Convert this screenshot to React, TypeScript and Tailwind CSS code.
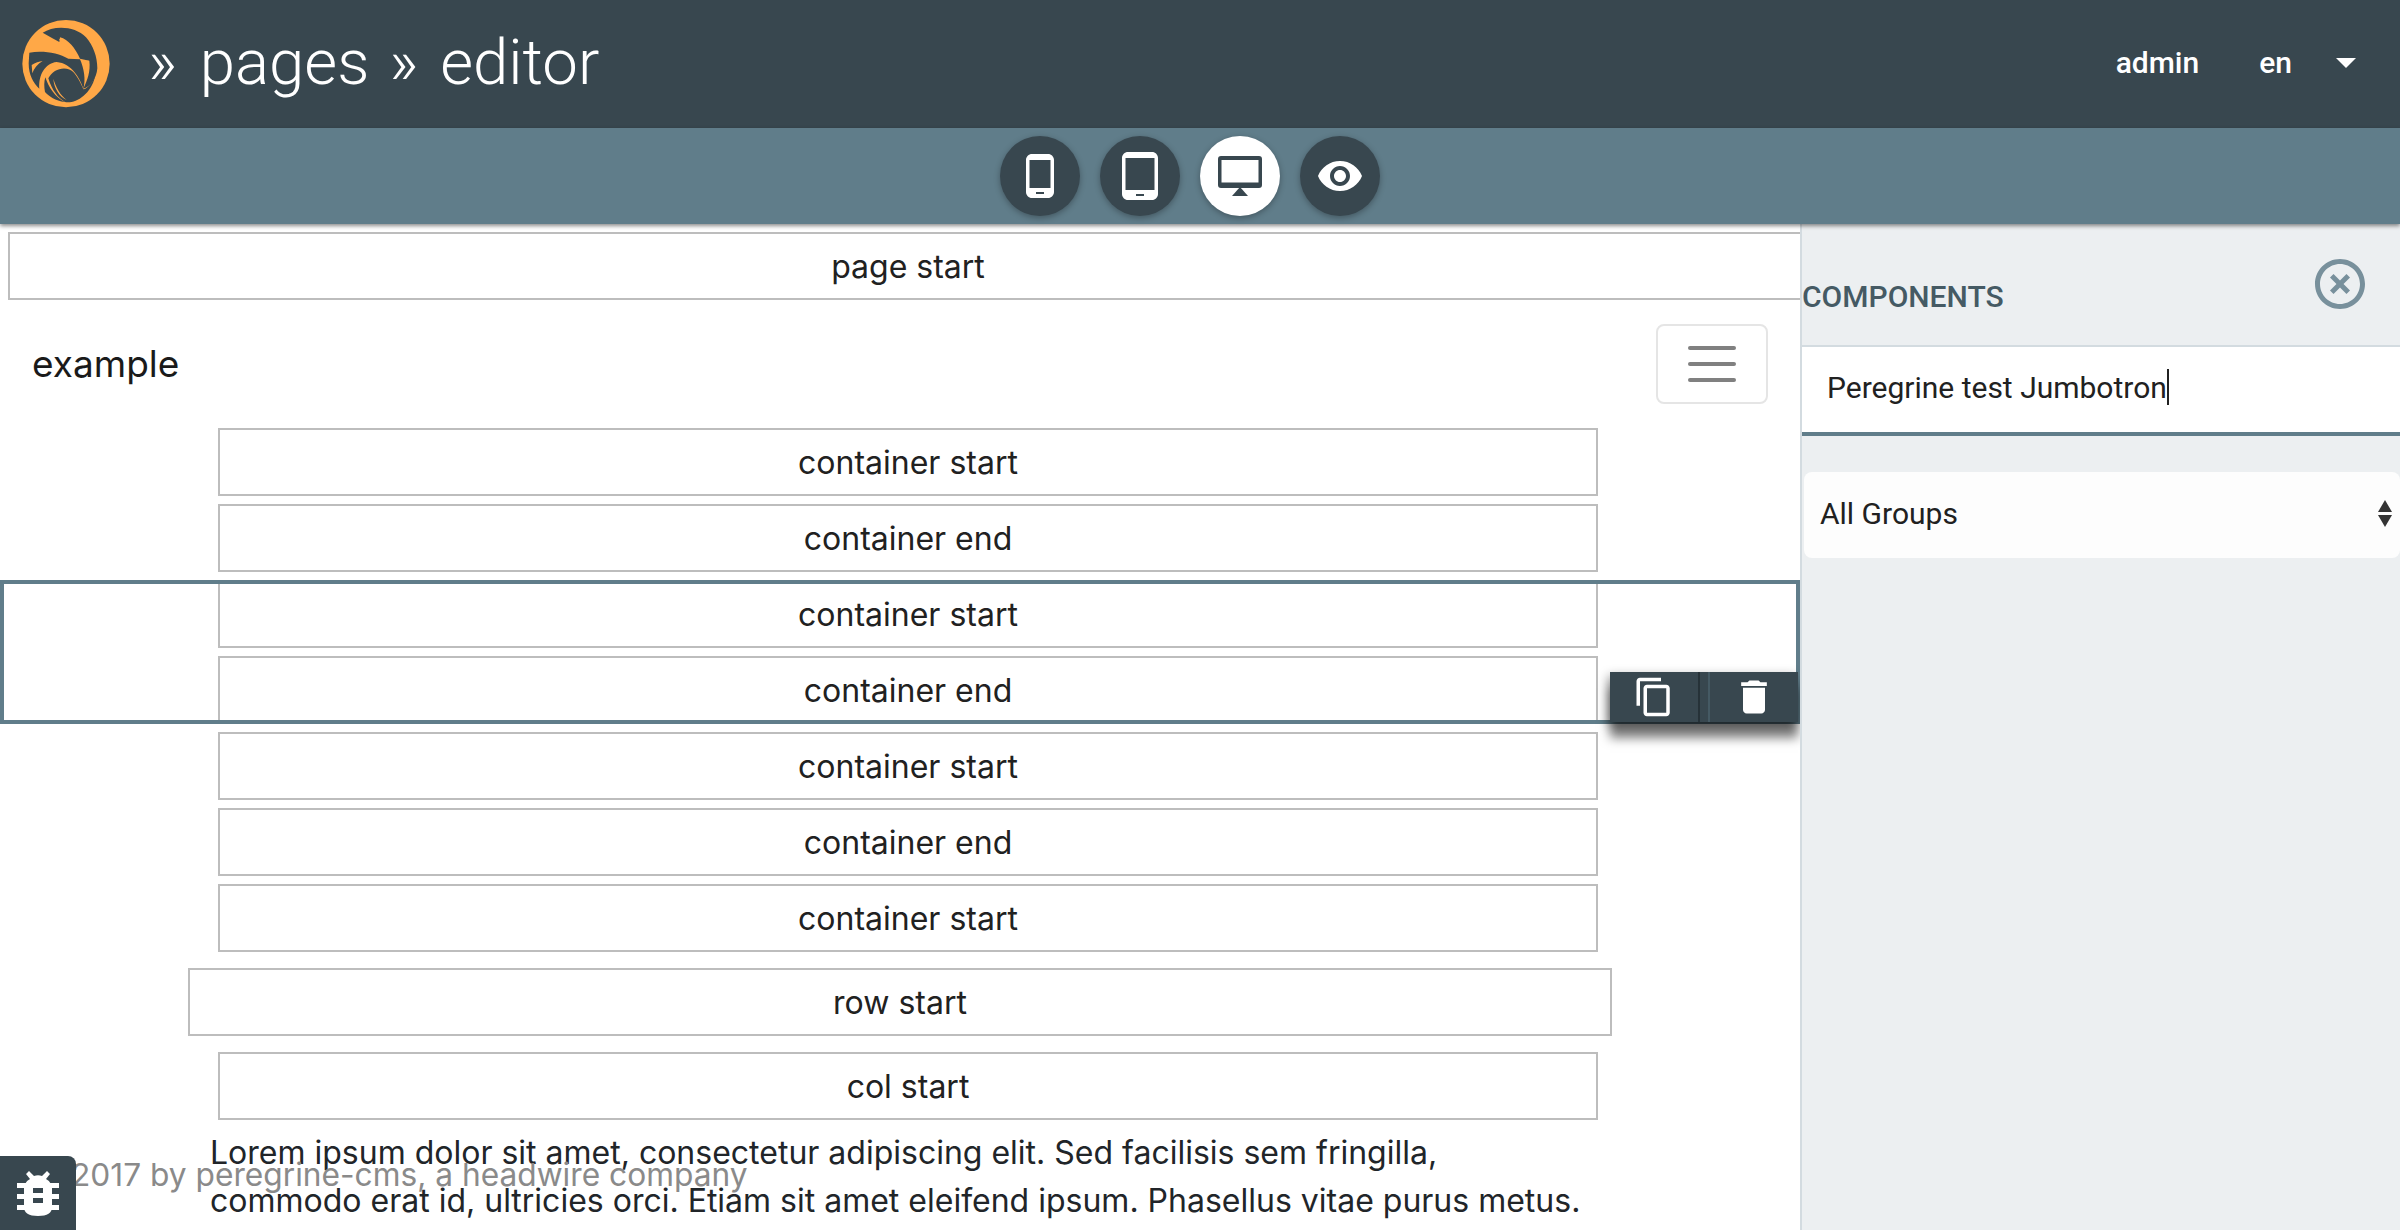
import { MdPhoneAndroid, MdTabletAndroid, MdVisibility, MdContentCopy, MdDelete, MdHighlightOff } from 'react-icons/md';

function Logo() {
  return (
    <svg viewBox="0 0 390 390" className="w-[130px] h-[130px] absolute left-0 top-0">
      <circle cx="198" cy="191" r="131" fill="#ffa847" />
      {/* dark cut-outs of the eagle */}
      <path d="M128 98 C160 76 225 76 258 112 C280 138 292 170 292 205 C290 235 270 262 250 266 C262 240 272 215 268 182 L240 176 C226 145 205 118 180 112 L178 126 L160 116 Z" fill="#38474f" />
      <path d="M88 158 C125 150 175 158 205 176 L240 178 C252 205 258 240 250 266 C240 235 215 190 170 186 C135 190 115 225 118 266 C100 250 86 225 86 190 Z" fill="#38474f" />
      <path d="M145 235 C160 205 200 195 222 218 C236 236 246 256 250 268 C262 266 275 250 285 230 C272 285 225 312 195 306 C175 295 155 270 145 235 Z" fill="#38474f" />
      <path d="M136 232 C146 262 165 292 195 306 C165 302 148 290 135 276 C132 260 132 245 136 232 Z" fill="#38474f" />
      <path d="M95 195 C105 188 118 184 128 183 C112 192 102 205 97 220 Z" fill="#ffa847" />
      <path d="M176 116 C195 125 212 145 222 170 C205 155 190 135 176 116 Z" fill="#ffa847" />
      <path d="M255 182 L266 182 L262 198 Z" fill="#ffa847" />
      <path d="M160 236 C168 262 180 285 200 300 C178 290 162 265 160 236 Z" fill="#ffa847" />
    </svg>
  );
}

function DesktopIcon() {
  return (
    <svg viewBox="0 0 44 40" className="w-11 h-10" fill="currentColor">
      <path fillRule="evenodd" d="M3 0H41a3 3 0 0 1 3 3V29a3 3 0 0 1-3 3H3a3 3 0 0 1-3-3V3a3 3 0 0 1 3-3ZM3.500 4V26.500H40.500V4Z" />
      <path d="M22 31L30 40H14Z" />
    </svg>
  );
}

function BugIcon() {
  return (
    <svg viewBox="0 0 42 45" className="w-[42px] h-[45px]" fill="white">
      <path d="M9 3L12 0L17 5Q21 3.500 25 5L30 0L33 3L29 8Q33 10 34 13H8Q9 10 13 8Z" />
      <path d="M7 13H35V36Q35 45 21 45Q7 45 7 36Z" />
      <rect x="0" y="12" width="42" height="5" />
      <rect x="0" y="23" width="42" height="5" />
      <rect x="0" y="34" width="42" height="5" />
      <rect x="16" y="17" width="10" height="5" fill="#38474f" />
      <rect x="16" y="27" width="10" height="5" fill="#38474f" />
    </svg>
  );
}

function Box({ label, className }: { label: string; className: string }) {
  return (
    <div className={`h-[68px] shrink-0 pt-[2px] border-2 border-[#bdbdbd] bg-white flex items-center justify-center text-[32px] text-[#212121] ${className}`}>
      {label}
    </div>
  );
}

function ToolButton({ children, active }: { children: React.ReactNode; active?: boolean }) {
  return (
    <div className={`w-20 h-20 rounded-full flex items-center justify-center shadow-[0_2px_6px_rgba(0,0,0,0.3)] ${active ? 'bg-white text-[#38474f]' : 'bg-[#38474f] text-white'}`}>
      {children}
    </div>
  );
}

export default function App() {
  return (
    <div className="relative w-[2400px] h-[1230px] overflow-hidden bg-white font-['Inter',sans-serif]">
      {/* Header */}
      <header className="relative h-32 bg-[#38474f] flex items-center text-white font-['Roboto',sans-serif]">
        <Logo />
        <div className="flex items-center pl-[148px] pb-[3px] text-[63.500px] font-light leading-none">
          <span>»</span>
          <span className="ml-[23px]">pages</span>
          <span className="ml-[20px]">»</span>
          <span className="ml-[22px]">editor</span>
        </div>
        <div className="ml-auto flex items-center text-[30px] font-medium pr-11 pb-[3px]">
          <span>admin</span>
          <span className="ml-[60px]">en</span>
          <span className="ml-[44px] w-0 h-0 border-x-[10px] border-x-transparent border-t-[10px] border-t-white" />
        </div>
      </header>

      {/* Toolbar */}
      <div className="relative z-10 h-24 pr-5 bg-[#607d8a] flex items-center justify-center gap-5 shadow-[0_2px_4px_rgba(0,0,0,0.45)]">
        <ToolButton><MdPhoneAndroid className="w-[48px] h-[48px]" /></ToolButton>
        <ToolButton><MdTabletAndroid className="w-[48px] h-[48px]" /></ToolButton>
        <ToolButton active><DesktopIcon /></ToolButton>
        <ToolButton><MdVisibility className="w-[48px] h-[48px]" /></ToolButton>
      </div>

      <div className="flex h-[1006px]">
        {/* Page canvas */}
        <main className="relative w-[1800px] shrink-0 pt-2 overflow-hidden">
          <Box label="page start" className="ml-2 w-[1800px]" />
          <div className="flex items-center justify-between px-8 py-6">
            <span className="text-[37px] text-[#1a1a1a]">example</span>
            <div className="w-28 h-20 border-2 border-[#e5e5e5] rounded-lg flex flex-col items-center justify-center gap-3">
              <span className="block w-12 h-1 rounded-full bg-[#808080]" />
              <span className="block w-12 h-1 rounded-full bg-[#808080]" />
              <span className="block w-12 h-1 rounded-full bg-[#808080]" />
            </div>
          </div>
          <div className="flex flex-col gap-2 ml-[218px] w-[1380px]">
            <Box label="container start" className="w-full" />
            <Box label="container end" className="w-full" />
            <div className="relative flex flex-col gap-2">
              <Box label="container start" className="w-full" />
              <Box label="container end" className="w-full" />
              {/* Selection outline */}
              <div className="absolute -left-[218px] -right-[202px] inset-y-0 border-4 border-[#607d8a]">
                <div className="absolute -right-[2px] bottom-[-2px] w-[188px] h-[50px] bg-[#38474f] flex items-center shadow-[0_16px_10px_rgba(0,0,0,0.5),-2px_4px_10px_rgba(0,0,0,0.4)]">
                  <div className="w-[88px] flex justify-center text-white"><MdContentCopy className="w-[42px] h-[42px]" /></div>
                  <div className="w-[2px] h-full bg-[#263238]" />
                  <div className="w-2 h-full" />
                  <div className="w-[2px] h-full bg-[#455a64]" />
                  <div className="flex-1 flex justify-center text-white"><MdDelete className="w-[44px] h-[44px]" /></div>
                </div>
              </div>
            </div>
            <Box label="container start" className="w-full" />
            <Box label="container end" className="w-full" />
            <Box label="container start" className="w-full" />
          </div>
          <Box label="row start" className="mt-4 ml-[188px] w-[1424px]" />
          <Box label="col start" className="mt-4 ml-[218px] w-[1380px]" />
          <p className="mt-[9px] ml-[210px] text-[32px] leading-[48px] text-[#212529] w-[1385px]">
            Lorem ipsum dolor sit amet, consectetur adipiscing elit. Sed facilisis sem fringilla, commodo erat id, ultricies orci. Etiam sit amet eleifend ipsum. Phasellus vitae purus metus.
          </p>
        </main>

        {/* Components panel */}
        <aside className="w-[600px] border-l-2 border-[#d3dbe0] bg-[#eceff1] font-['Roboto',sans-serif]">
          <div className="h-[121px] relative flex items-end pb-[33px]">
            <h2 className="text-[30px] leading-none font-medium text-[#455a64]">COMPONENTS</h2>
            <MdHighlightOff className="absolute left-[508px] top-[30px] w-[60px] h-[60px] text-[#78909c]" />
          </div>
          <div className="h-[91px] pl-[25px] pb-[5px] flex items-center bg-white border-t-2 border-t-[#d3dbe0] border-b-4 border-b-[#607d8a] text-[30px] text-[#212121]">
            Peregrine test Jumbotron
            <span className="inline-block w-[2px] h-9 bg-[#212121]" />
          </div>
          <div className="mt-9 ml-[2px] h-[86px] pl-4 pr-2 pb-1 flex items-center justify-between bg-[#fdfdfd] rounded-lg text-[30px] text-[#212121]">
            <span>All Groups</span>
            <span className="flex flex-col gap-[3px]">
              <span className="w-0 h-0 border-x-[7px] border-x-transparent border-b-[12px] border-b-[#333333]" />
              <span className="w-0 h-0 border-x-[7px] border-x-transparent border-t-[12px] border-t-[#333333]" />
            </span>
          </div>
        </aside>
      </div>

      {/* Footer overlay */}
      <div className="absolute left-0 bottom-0 w-[76px] h-[74px] z-20 bg-[#38474f] rounded-tr-lg flex items-center justify-center text-white">
        <BugIcon />
      </div>
      <div className="absolute left-[71px] top-[1155px] z-10 text-[31.700px] leading-[40px] text-[#8a8a8a] whitespace-nowrap">
        2017 by peregrine-cms, a headwire company
      </div>
    </div>
  );
}
